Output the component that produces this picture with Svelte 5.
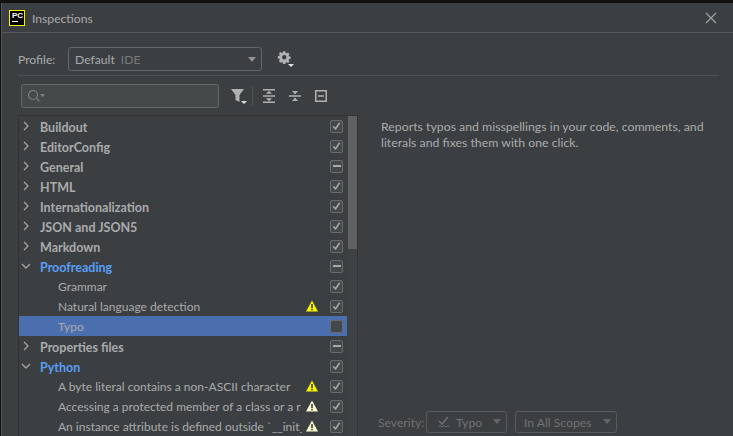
<script>
  const rows = [
    { text: "Buildout", group: true, open: false, check: "on" },
    { text: "EditorConfig", group: true, open: false, check: "on" },
    { text: "General", group: true, open: false, check: "mixed" },
    { text: "HTML", group: true, open: false, check: "on" },
    { text: "Internationalization", group: true, open: false, check: "on" },
    { text: "JSON and JSON5", group: true, open: false, check: "on" },
    { text: "Markdown", group: true, open: false, check: "on" },
    { text: "Proofreading", group: true, open: true, blue: true, check: "mixed" },
    { text: "Grammar", check: "on" },
    { text: "Natural language detection", warn: "yellow", check: "on" },
    { text: "Typo", selected: true, check: "off" },
    { text: "Properties files", group: true, open: false, check: "mixed" },
    { text: "Python", group: true, open: true, blue: true, check: "on" },
    { text: "A byte literal contains a non-ASCII character", warn: "yellow", check: "on" },
    { text: "Accessing a protected member of a class or a r", warn: "pale", check: "on" },
    { text: "An instance attribute is defined outside `__init_", warn: "pale", check: "on" }
  ];
</script>

<div class="screen">
  <div class="window">
    <header class="titlebar">
      <div class="logo"><span>PC</span><i></i></div>
      <span class="title">Inspections</span>
      <svg class="close" width="12" height="12" viewBox="0 0 12 12"><path d="M1 1l10 10M11 1L1 11" stroke="#a0a2a4" stroke-width="1.2" fill="none" /></svg>
    </header>

    <div class="body">
      <div class="profile">
        <label for="profile-box">Profile:</label>
        <div class="combo profile-combo" id="profile-box">
          <span>Default</span><span class="dim">IDE</span>
          <span class="caret"></span>
        </div>
        <svg class="gear" width="18" height="18" viewBox="0 0 18 18">
          <path fill="#afb1b3" fill-rule="evenodd" d="M7.2 1.5h2.6l.4 1.9 1.2.5 1.6-1.1 1.8 1.8-1.1 1.6.5 1.2 1.9.4v2.6l-1.9.4-.5 1.2 1.1 1.6-1.8 1.8-1.6-1.1-1.2.5-.4 1.7H7.2l-.4-1.7-1.2-.5L4 14.9l-1.8-1.8 1.1-1.6-.5-1.2-1.9-.4V7.3l1.9-.4.5-1.2-1.1-1.6L4 2.3l1.6 1.1 1.2-.5zM8.5 6a2.6 2.6 0 1 0 0 5.2 2.6 2.6 0 0 0 0-5.2z" transform="scale(.85)" />
          <path fill="#dfe1e3" d="M11 14h6l-3 3z" />
        </svg>
      </div>

      <div class="columns">
        <section class="left">
          <div class="toolbar">
            <div class="search">
              <svg width="18" height="14" viewBox="0 0 18 14"><circle cx="6" cy="6" r="4.5" fill="none" stroke="#7f8284" stroke-width="1.1" /><path d="M9.4 9.4l3 3" stroke="#7f8284" stroke-width="1.3" /><path d="M13 5h5l-2.500 3z" fill="#7f8284" /></svg>
            </div>
            <div class="tools">
              <svg width="18" height="18" viewBox="0 0 18 18"><path fill="#afb1b3" d="M1 2h13L9.500 8v7l-4-2V8z" /><path fill="#dfe1e3" d="M11 14h6l-3 3z" /></svg>
              <span class="sep"></span>
              <svg width="14" height="14" viewBox="0 0 14 14"><path fill="#afb1b3" d="M1 0h12v1.500H1zM1 12.500h12V14H1zM1 6.200h12v1.500H1zM7 1.800l3 3H4zM7 12.200l-3-3h6z" /></svg>
              <svg width="14" height="14" viewBox="0 0 14 14"><path fill="#afb1b3" d="M1 6.200h12v1.500H1zM7 5.400l-3-3.400h6zM7 8.600l3 3.400H4z" /></svg>
              <svg width="14" height="14" viewBox="0 0 14 14"><path fill="#afb1b3" fill-rule="evenodd" d="M1 1h12v12H1zM2.500 2.500v9h9v-9zM4 6.200h6v1.500H4z" /></svg>
            </div>
          </div>

          <div class="tree">
            <ul>
              {#each rows as row}
                <li class:selected={row.selected}>
                  {#if row.group}
                    <svg class="arrow" width="10" height="10" viewBox="0 0 10 10">
                      {#if row.open}
                        <path d="M1 3l4 4 4-4" fill="none" stroke="#a0a2a4" stroke-width="1.3" />
                      {:else}
                        <path d="M3 1l4 4-4 4" fill="none" stroke="#a0a2a4" stroke-width="1.3" />
                      {/if}
                    </svg>
                  {/if}
                  <span class="name" class:group={row.group} class:blue={row.blue}>{row.text}</span>
                  {#if row.warn}
                    <svg class="warn" width="12" height="12" viewBox="0 0 12 12">
                      <path d="M6 .5L12 11.500H0z" fill={row.warn === "yellow" ? "#f4f400" : "#fbfbd0"} />
                      <path d="M5.300 4h1.400v4H5.300zM5.300 8.800h1.400v1.400H5.300z" fill="#222" />
                    </svg>
                  {/if}
                  <span class="check">
                    {#if row.check === "on"}
                      <svg width="12" height="12" viewBox="0 0 12 12"><path d="M2.500 6.500l2.500 2.500 4.500-6.500" fill="none" stroke="#a9abad" stroke-width="1.600" /></svg>
                    {:else if row.check === "mixed"}
                      <span class="dash"></span>
                    {/if}
                  </span>
                </li>
              {/each}
            </ul>
            <div class="scrollbar"><span class="thumb"></span></div>
          </div>
        </section>

        <section class="right">
          <p class="description">Reports typos and misspellings in your code, comments, and literals and fixes them with one click.</p>
          <div class="severity">
            <span class="sev-label">Severity:</span>
            <div class="combo off typo-combo">
              <svg width="18" height="14" viewBox="0 0 18 14"><path d="M3 6l3 3 6-7" fill="none" stroke="#6a6c6e" stroke-width="1.600" /><path d="M2 12l2-1.500 2 1.500 2-1.500 2 1.500 2-1.500 2 1.500" fill="none" stroke="#6a6c6e" /></svg>
              <span>Typo</span>
              <span class="caret"></span>
            </div>
            <div class="combo off scope-combo">
              <span>In All Scopes</span>
              <span class="caret"></span>
            </div>
          </div>
        </section>
      </div>
    </div>
  </div>
</div>

<style>
  :global(body) {
    margin: 0;
    background: #1c1c1c;
  }

  .screen {
    width: 733px;
    height: 436px;
    overflow: hidden;
    padding-top: 3px;
    box-sizing: border-box;
    background: #111;
  }

  .window {
    height: 433px;
    margin-left: 1px;
    background: #3c3f41;
    border-left: 1px solid #555759;
    font-family: "Lato", sans-serif;
    font-size: 12.15px;
    color: #a9abad;
    overflow: hidden;
  }

  .titlebar {
    height: 28px;
    padding: 1px 16px 0 7px;
    display: flex;
    align-items: center;
    border-bottom: 1px solid #555759;
  }

  .logo {
    width: 16px;
    height: 16px;
    box-sizing: border-box;
    border: 1px solid #f4f400;
    background: #000;
  }

  .logo span {
    display: block;
    color: #fff;
    font: bold 8px/10px "Liberation Sans", sans-serif;
    padding-left: 2px;
  }

  .logo i {
    display: block;
    width: 6px;
    height: 1px;
    background: #fff;
    margin-left: 2px;
  }

  .title {
    margin-left: 7px;
    flex: 1;
  }

  .body {
    padding: 0 14px 0 16px;
  }

  .profile {
    padding: 14px 0 4px;
    display: flex;
    align-items: center;
    border-bottom: 1px solid #4f5153;
  }

  .profile label {
    width: 50px;
  }

  .combo {
    display: flex;
    align-items: center;
    box-sizing: border-box;
    height: 24px;
    border: 1px solid #646769;
    border-radius: 3px;
    padding: 0 6px;
    position: relative;
  }

  .profile-combo {
    width: 194px;
    gap: 6px;
  }

  .dim {
    color: #787a7c;
  }

  .caret {
    position: absolute;
    right: 5px;
    top: 9px;
    border-left: 4.500px solid transparent;
    border-right: 4.500px solid transparent;
    border-top: 5px solid #8f9193;
  }

  .gear {
    margin-left: 15px;
  }

  .columns {
    display: flex;
  }

  .left {
    width: 340px;
    flex: none;
  }

  .toolbar {
    display: flex;
    align-items: center;
    padding: 8px 0 7px 3px;
  }

  .search {
    width: 198px;
    height: 24px;
    box-sizing: border-box;
    background: #45494a;
    border: 1px solid #646769;
    border-radius: 2px;
    display: flex;
    align-items: center;
    padding-left: 5px;
  }

  .tools {
    display: flex;
    align-items: center;
    margin-left: 11px;
    gap: 12px;
  }

  .sep {
    width: 1px;
    height: 20px;
    background: #505254;
    margin: 0 -3px 0 -8px;
  }

  .tree {
    display: flex;
    border: 1px solid #323232;
    border-bottom: 0;
    height: 321px;
  }

  ul {
    list-style: none;
    margin: 0;
    padding: 0;
    width: 328px;
  }

  li {
    height: 20px;
    display: flex;
    align-items: center;
    padding-left: 39px;
    padding-right: 4px;
    position: relative;
    box-sizing: border-box;
  }

  li.selected {
    background: #4b6eaf;
  }

  .arrow {
    position: absolute;
    left: 2px;
    top: 5px;
  }

  .name {
    flex: 1;
    min-width: 0;
    font-size: 12px;
    white-space: nowrap;
    overflow: hidden;
    margin-right: 4px;
  }

  .name.group {
    margin-left: -18px;
    padding-top: 2px;
    font-size: 12.5px;
    font-weight: 700;
  }

  .name.blue {
    color: #589df6;
  }

  .warn {
    margin-right: 12px;
    flex: none;
  }

  .check {
    width: 13px;
    height: 13px;
    flex: none;
    box-sizing: border-box;
    border: 1px solid #6b6b6b;
    border-radius: 2px;
    background: #43494a;
    display: flex;
    align-items: center;
    justify-content: center;
  }

  .dash {
    width: 8px;
    height: 2px;
    background: #a9abad;
  }

  .scrollbar {
    width: 10px;
    margin-left: 1px;
    background: #3f4244;
  }

  .thumb {
    display: block;
    height: 133px;
    background: #5f6163;
  }

  .right {
    flex: 1;
    padding-left: 23px;
    position: relative;
    height: 357px;
  }

  .description {
    margin: 0;
    padding-top: 43px;
    width: 335px;
    font-size: 12.3px;
    line-height: 16px;
  }

  .severity {
    position: absolute;
    left: 20px;
    top: 335px;
    display: flex;
    align-items: center;
    color: #707274;
  }

  .sev-label {
    width: 48px;
  }

  .off {
    height: 22px;
    border-color: #585a5c;
    color: #707274;
  }

  .off .caret {
    border-top-color: #646668;
    top: 7px;
  }

  .typo-combo {
    width: 81px;
    gap: 2px;
    padding-left: 9px;
  }

  .scope-combo {
    width: 102px;
    margin-left: 8px;
    padding-left: 8px;
  }
</style>
